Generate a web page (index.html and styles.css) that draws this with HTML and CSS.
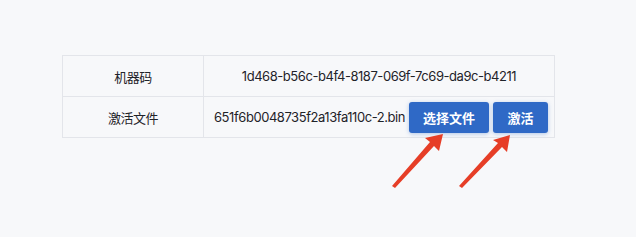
FILE: index.html
```html
<!DOCTYPE html>
<html lang="zh">
<head>
<meta charset="utf-8">
<link rel="stylesheet" href="styles.css">
</head>
<body>
<div class="page">
  <table class="info">
    <tr>
      <td class="label">机器码</td>
      <td class="value center">1d468-b56c-b4f4-8187-069f-7c69-da9c-b4211</td>
    </tr>
    <tr>
      <td class="label">激活文件</td>
      <td class="value">
        <div class="file-row">
          <span class="filename">651f6b0048735f2a13fa110c-2.bin</span>
          <button class="btn btn-wide">选择文件</button>
          <button class="btn btn-narrow">激活</button>
        </div>
      </td>
    </tr>
  </table>
  <svg class="arrows" width="636" height="237" viewBox="0 0 636 237">
    <polygon points="443,134 439,151 434,146 395,188 392,186 430,142 425,138" />
    <polygon points="510,135 507,152 502,147 462,188 459,186 498,143 493,140" />
  </svg>
</div>
</body>
</html>
```
FILE: styles.css
```css
html, body {
  margin: 0;
  padding: 0;
  background: #f7f8fa;
}
.page {
  position: relative;
  width: 636px;
  height: 237px;
  padding: 55px 0 0 62px;
  box-sizing: border-box;
  font-family: "Inter", "Noto Sans CJK SC", sans-serif;
  color: #1f2329;
}
.info {
  border-collapse: collapse;
  width: 493px;
  background: #f7f8fa;
}
.info td {
  border: 1px solid #e3e5ea;
  height: 41px;
  padding: 0;
  font-size: 13px;
  letter-spacing: -0.45px;
  white-space: nowrap;
  box-sizing: border-box;
}
.label {
  width: 141px;
  text-align: center;
}
.center {
  text-align: center;
}
.file-row {
  display: flex;
  align-items: center;
  padding: 0 6px 0 10px;
  gap: 4px;
}
.filename {
  flex: 1;
}
.btn {
  height: 31px;
  border: none;
  border-radius: 3px;
  background: #2f69c6;
  color: #fff;
  font-family: "Noto Sans CJK SC", sans-serif;
  font-weight: 700;
  font-size: 13px;
  letter-spacing: 0;
  box-shadow: 0 1px 4px rgba(47, 105, 198, 0.35);
  padding: 0;
}
.btn-wide { width: 80px; }
.btn-narrow { width: 55px; }
.arrows {
  position: absolute;
  left: 0;
  top: 0;
  pointer-events: none;
}
.arrows polygon {
  fill: #e63e27;
}
```
